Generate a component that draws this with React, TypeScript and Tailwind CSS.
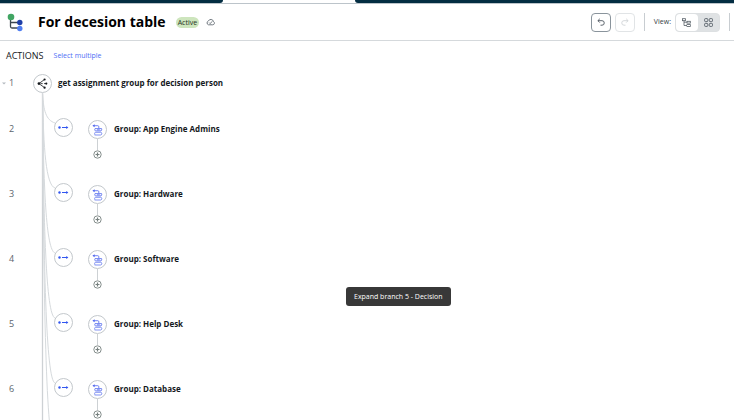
import React, { useState } from "react";

const groups = [
  { id: 2, name: "App Engine Admins" },
  { id: 3, name: "Hardware" },
  { id: 4, name: "Software" },
  { id: 5, name: "Help Desk" },
  { id: 6, name: "Database" },
];

function LogoIcon() {
  return (
    <svg width="17" height="19" viewBox="0 0 17 19" fill="none">
      <path d="M3.500 5v8.500c0 1 .5 1.500 1.500 1.500H12M3.500 9.500H12" stroke="#3c4650" strokeWidth="1.300" />
      <circle cx="4" cy="4" r="3.300" fill="#41a563" />
      <circle cx="12.800" cy="9.500" r="2.700" fill="#1f3fa8" />
      <circle cx="12.800" cy="15.500" r="2.700" fill="#4f7df0" />
    </svg>
  );
}

function CloudIcon() {
  return (
    <svg width="9" height="8" viewBox="0 0 9 8" fill="none" stroke="#626b73" strokeWidth="0.9">
      <path d="M2.500 6.800h4.200a1.700 1.700 0 0 0 .8-3.200A2.700 2.700 0 0 0 2.400 3 2 2 0 0 0 2.500 6.800z" />
      <path d="M3.200 4.600l1 1 2-2.300" />
    </svg>
  );
}

function UndoIcon() {
  return (
    <svg width="8" height="8" viewBox="0 0 8 8" fill="none" stroke="currentColor" strokeWidth="0.9">
      <path d="M2.800.8L.9 2.700l1.900 1.900M1 2.700h4a2.200 2.200 0 0 1 0 4.500H3.500" />
    </svg>
  );
}

function RedoIcon() {
  return (
    <svg width="8" height="8" viewBox="0 0 8 8" fill="none" stroke="currentColor" strokeWidth="0.9">
      <path d="M5.200.8l1.900 1.900-1.900 1.900M7 2.700H3a2.200 2.200 0 0 0 0 4.500h1.500" />
    </svg>
  );
}

function TreeIcon() {
  return (
    <svg width="9" height="9" viewBox="0 0 9 9" fill="none" stroke="#555e66" strokeWidth="0.8">
      <rect x="0.500" y="0.700" width="3" height="2" />
      <rect x="5" y="3.300" width="3.300" height="1.800" />
      <rect x="5" y="6.600" width="3.300" height="1.800" />
      <path d="M2 2.700v4.800h3M2 4.200h3" />
    </svg>
  );
}

function GridIcon() {
  return (
    <svg width="9" height="9" viewBox="0 0 9 9" fill="none" stroke="#555e66" strokeWidth="0.9">
      <rect x="0.600" y="0.600" width="3.200" height="3" rx="0.800" />
      <rect x="5.300" y="0.600" width="3.200" height="3" rx="0.800" />
      <rect x="0.600" y="5.400" width="3.200" height="3" rx="0.800" />
      <rect x="5.300" y="5.400" width="3.200" height="3" rx="0.800" />
    </svg>
  );
}

function DecisionIcon() {
  return (
    <svg width="11" height="11" viewBox="0 0 11 11" fill="none" stroke="#15191d" strokeWidth="0.8">
      <path d="M1.900 5.600L7.400 1.600M1.900 5.600l5.500 3.900M3.500 5.600h2.200M7 5.600h2" />
      <g fill="#15191d" stroke="none">
        <circle cx="1.900" cy="5.600" r="1.300" />
        <circle cx="7.600" cy="1.500" r="1.100" />
        <circle cx="9.300" cy="5.600" r="1.100" />
        <circle cx="7.600" cy="9.700" r="1.100" />
      </g>
    </svg>
  );
}

function BranchIcon() {
  return (
    <svg width="11" height="7" viewBox="0 0 11 7" fill="none">
      <circle cx="1.500" cy="3.500" r="1.200" fill="#3156f0" />
      <path d="M4 3.500h5" stroke="#3156f0" />
      <path d="M8.200 2l2.200 1.500L8.200 5z" fill="#3156f0" />
    </svg>
  );
}

function SubflowIcon() {
  return (
    <svg width="11" height="12" viewBox="0 0 11 12" fill="none" stroke="#4e64ee" strokeWidth="0.8">
      <path d="M2.600.2L.4 1.700l2.200 1.500z" fill="#4e64ee" stroke="none" />
      <path d="M1.500 1.700h4.300c.6 0 1 .3 1 1v1.600" />
      <path d="M3 4.600h6.600M3 4.600c-.5.700-.3 1.600.4 2.300h5.700c.6-.7.800-1.600.5-2.300M5 5.800h2.800" />
      <path d="M3.300 8.300h5.200c.9 0 1.300.5 1.300 1.300S9.300 11 8.500 11H2.600M3.300 8.300c-.7.500-.9 1.600-.4 2.400" strokeWidth="0.700" />
    </svg>
  );
}

function Connectors() {
  return (
    <svg className="pointer-events-none absolute left-0 top-0 h-full w-20" fill="none" stroke="#d6dadd">
      <path d="M42.500 20V420" stroke="#cdd1d4" strokeWidth="1.300" />
      {[50, 115, 180, 245, 310, 375].map((y) => (
        <path key={y} d={`M42.500 20C43.500 ${20 + (y - 20) * 0.6} 46 ${y - 3} 55 ${y}`} />
      ))}
    </svg>
  );
}

export default function App() {
  const [view, setView] = useState("tree");
  const [open, setOpen] = useState(true);

  return (
    <div className="relative flex h-screen flex-col overflow-hidden bg-white font-['Open_Sans','Noto_Sans',sans-serif] text-[#15191d]">
      <div className="flex h-1 shrink-0 border-b border-[#bcc4ca]">
        <div className="w-[223px] rounded-br bg-[#032d42]" />
        <div className="w-[132px]" />
        <div className="grow rounded-bl bg-[#032d42]" />
      </div>

      <header className="flex h-[37px] shrink-0 items-center border-b border-[#d5d9dc] pl-[7px]">
        <LogoIcon />
        <h1 className="ml-[14px] whitespace-nowrap text-[14px] leading-6 font-bold text-black">For decesion table</h1>
        <span className="ml-2.5 rounded-full bg-[#cde5bd] px-0.5 text-[7px] leading-[11px] text-[#26321f]">Active</span>
        <span className="ml-[7px]"><CloudIcon /></span>
        <div className="ml-auto flex items-center">
          <button type="button" aria-label="Undo" className="flex h-[19px] w-5 items-center justify-center rounded border border-[#8a949c] text-[#4c555d]">
            <UndoIcon />
          </button>
          <button type="button" aria-label="Redo" disabled className="ml-1 flex h-[19px] w-5 items-center justify-center rounded border border-[#e1e4e6] text-[#d0d4d7]">
            <RedoIcon />
          </button>
          <div className="ml-[9px] h-[18px] w-px bg-[#c8cdd1]" />
          <span className="ml-[9px] text-[7px] leading-3 text-[#333c44]">View:</span>
          <div className="ml-1 flex h-[19px] w-[45px] rounded border border-[#dde0e2] bg-[#dfe2e4]">
            <button
              type="button"
              aria-label="Tree view"
              aria-pressed={view === "tree"}
              onClick={() => setView("tree")}
              className={view === "tree" ? "flex flex-1 items-center justify-center rounded bg-white" : "flex flex-1 items-center justify-center"}
            >
              <TreeIcon />
            </button>
            <button
              type="button"
              aria-label="Diagram view"
              aria-pressed={view === "grid"}
              onClick={() => setView("grid")}
              className={view === "grid" ? "flex flex-1 items-center justify-center rounded bg-white" : "flex flex-1 items-center justify-center"}
            >
              <GridIcon />
            </button>
          </div>
          <div className="mr-1 ml-[9px] h-[18px] w-px bg-[#c8cdd1]" />
        </div>
      </header>

      <main className="flex min-h-0 grow flex-col">
        <div className="flex h-8 shrink-0 items-center gap-2.5 px-1.5 pb-0.5">
          <h2 className="text-[9px] leading-4 font-medium">ACTIONS</h2>
          <button type="button" className="text-[7px] leading-4 text-[#4f6df5]">Select multiple</button>
        </div>

        <div className="relative min-h-0 grow">
          <Connectors />
          <div className="relative flex h-5 items-center">
            <button type="button" aria-label="Toggle decision" onClick={() => setOpen(!open)} className="flex w-[7px] justify-center">
              <svg width="4" height="3" viewBox="0 0 4 3"><path d="M0 .5h4L2 2.500z" fill="#b4babf" /></svg>
            </button>
            <span className="w-[26px] pl-0.5 text-[9px] text-[#5c656d]">1</span>
            <span className="flex size-[19px] items-center justify-center rounded-full border border-[#c3c8cc] bg-white">
              <DecisionIcon />
            </span>
            <h3 className="ml-1.5 text-[8px] font-bold">get assignment group for decision person</h3>
          </div>

          {open && (
            <ul className="pt-[25px]">
              {groups.map((g) => (
                <li key={g.id} className="relative flex h-[65px] items-start">
                  <span className="w-[54px] pt-px pl-[9px] text-[9px] leading-5 text-[#5c656d]">{g.id}</span>
                  <button type="button" aria-label={`Expand branch ${g.id}`} className="flex size-[19px] items-center justify-center rounded-full border border-[#c3c8cc] bg-white">
                    <BranchIcon />
                  </button>
                  <div className="ml-[15px] flex flex-col items-center pt-0.5">
                    <span className="flex size-[19px] items-center justify-center rounded-full border border-[#c3c8cc] bg-white">
                      <SubflowIcon />
                    </span>
                    <span className="h-[11px] w-px bg-[#cdd1d4]" />
                    <button type="button" aria-label="Add action">
                      <svg width="9" height="9" viewBox="0 0 9 9" fill="none" stroke="#77817f">
                        <circle cx="4.500" cy="4.500" r="3.700" strokeWidth="0.900" />
                        <path d="M2.500 4.500h4M4.500 2.500v4" strokeWidth="1.200" />
                      </svg>
                    </button>
                  </div>
                  <h3 className="ml-[7px] pt-px text-[8px] leading-5 font-bold">Group: {g.name}</h3>
                </li>
              ))}
            </ul>
          )}
        </div>
      </main>

      <div role="tooltip" className="absolute top-[287px] left-[346px] rounded-[3px] bg-[#383838] px-2 py-1 text-[7px] leading-[11px] text-white">
        Expand branch 5 - Decision
      </div>
    </div>
  );
}
